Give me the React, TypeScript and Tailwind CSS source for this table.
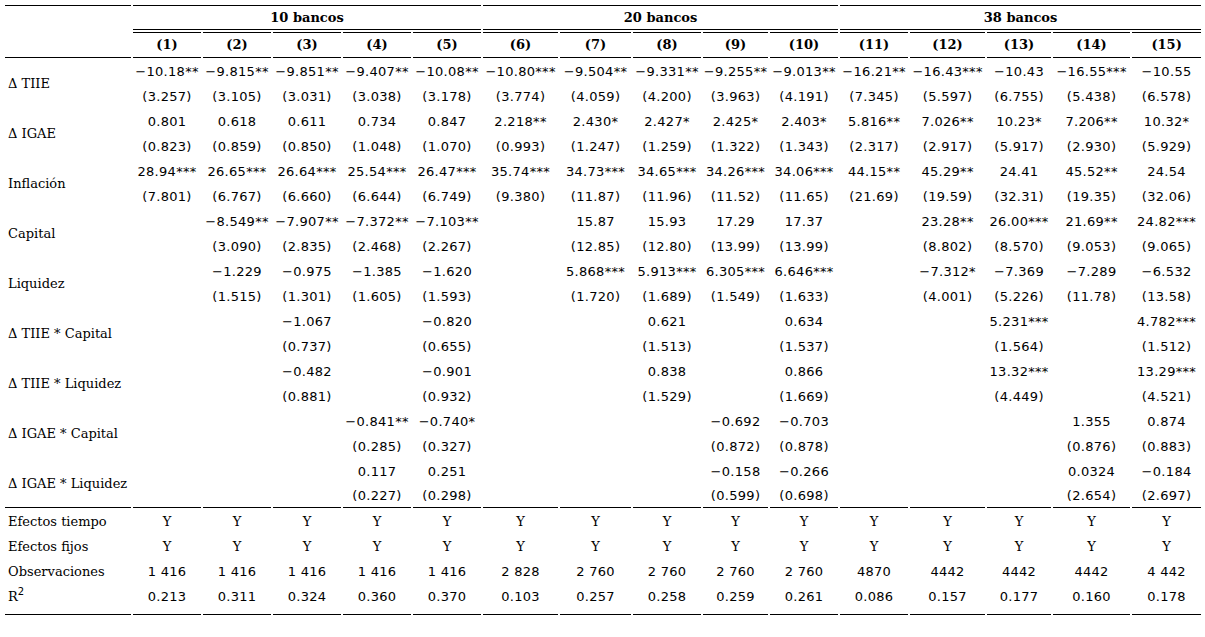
import React from "react";

const M = "\u2212";
type Row = { label: string; coef: string[]; se: string[] };

const e = (n: number) => Array(n).fill("");
const sparse = (m: Record<number, string>) => {
  const a = e(15);
  Object.entries(m).forEach(([k, v]) => (a[Number(k) - 1] = v));
  return a;
};

const rows: Row[] = [
  {
    label: "\u0394 TIIE",
    coef: [`${M}10.18**`, `${M}9.815**`, `${M}9.851**`, `${M}9.407**`, `${M}10.08**`, `${M}10.80***`, `${M}9.504**`, `${M}9.331**`, `${M}9.255**`, `${M}9.013**`, `${M}16.21**`, `${M}16.43***`, `${M}10.43`, `${M}16.55***`, `${M}10.55`],
    se: ["(3.257)", "(3.105)", "(3.031)", "(3.038)", "(3.178)", "(3.774)", "(4.059)", "(4.200)", "(3.963)", "(4.191)", "(7.345)", "(5.597)", "(6.755)", "(5.438)", "(6.578)"],
  },
  {
    label: "\u0394 IGAE",
    coef: ["0.801", "0.618", "0.611", "0.734", "0.847", "2.218**", "2.430*", "2.427*", "2.425*", "2.403*", "5.816**", "7.026**", "10.23*", "7.206**", "10.32*"],
    se: ["(0.823)", "(0.859)", "(0.850)", "(1.048)", "(1.070)", "(0.993)", "(1.247)", "(1.259)", "(1.322)", "(1.343)", "(2.317)", "(2.917)", "(5.917)", "(2.930)", "(5.929)"],
  },
  {
    label: "Inflación",
    coef: ["28.94***", "26.65***", "26.64***", "25.54***", "26.47***", "35.74***", "34.73***", "34.65***", "34.26***", "34.06***", "44.15**", "45.29**", "24.41", "45.52**", "24.54"],
    se: ["(7.801)", "(6.767)", "(6.660)", "(6.644)", "(6.749)", "(9.380)", "(11.87)", "(11.96)", "(11.52)", "(11.65)", "(21.69)", "(19.59)", "(32.31)", "(19.35)", "(32.06)"],
  },
  {
    label: "Capital",
    coef: ["", `${M}8.549**`, `${M}7.907**`, `${M}7.372**`, `${M}7.103**`, "", "15.87", "15.93", "17.29", "17.37", "", "23.28**", "26.00***", "21.69**", "24.82***"],
    se: ["", "(3.090)", "(2.835)", "(2.468)", "(2.267)", "", "(12.85)", "(12.80)", "(13.99)", "(13.99)", "", "(8.802)", "(8.570)", "(9.053)", "(9.065)"],
  },
  {
    label: "Liquidez",
    coef: ["", `${M}1.229`, `${M}0.975`, `${M}1.385`, `${M}1.620`, "", "5.868***", "5.913***", "6.305***", "6.646***", "", `${M}7.312*`, `${M}7.369`, `${M}7.289`, `${M}6.532`],
    se: ["", "(1.515)", "(1.301)", "(1.605)", "(1.593)", "", "(1.720)", "(1.689)", "(1.549)", "(1.633)", "", "(4.001)", "(5.226)", "(11.78)", "(13.58)"],
  },
  {
    label: "\u0394 TIIE * Capital",
    coef: sparse({ 3: `${M}1.067`, 5: `${M}0.820`, 8: "0.621", 10: "0.634", 13: "5.231***", 15: "4.782***" }),
    se: sparse({ 3: "(0.737)", 5: "(0.655)", 8: "(1.513)", 10: "(1.537)", 13: "(1.564)", 15: "(1.512)" }),
  },
  {
    label: "\u0394 TIIE * Liquidez",
    coef: sparse({ 3: `${M}0.482`, 5: `${M}0.901`, 8: "0.838", 10: "0.866", 13: "13.32***", 15: "13.29***" }),
    se: sparse({ 3: "(0.881)", 5: "(0.932)", 8: "(1.529)", 10: "(1.669)", 13: "(4.449)", 15: "(4.521)" }),
  },
  {
    label: "\u0394 IGAE * Capital",
    coef: sparse({ 4: `${M}0.841**`, 5: `${M}0.740*`, 9: `${M}0.692`, 10: `${M}0.703`, 14: "1.355", 15: "0.874" }),
    se: sparse({ 4: "(0.285)", 5: "(0.327)", 9: "(0.872)", 10: "(0.878)", 14: "(0.876)", 15: "(0.883)" }),
  },
  {
    label: "\u0394 IGAE * Liquidez",
    coef: sparse({ 4: "0.117", 5: "0.251", 9: `${M}0.158`, 10: `${M}0.266`, 14: "0.0324", 15: `${M}0.184` }),
    se: sparse({ 4: "(0.227)", 5: "(0.298)", 9: "(0.599)", 10: "(0.698)", 14: "(2.654)", 15: "(2.697)" }),
  },
];

const widths = [126, 68, 68, 68, 68, 68, 75, 71, 68, 65, 68, 68, 75, 64, 77, 69];

const obs = ["1 416", "1 416", "1 416", "1 416", "1 416", "2 828", "2 760", "2 760", "2 760", "2 760", "4870", "4442", "4442", "4442", "4 442"];
const r2 = ["0.213", "0.311", "0.324", "0.360", "0.370", "0.103", "0.257", "0.258", "0.259", "0.261", "0.086", "0.157", "0.177", "0.160", "0.178"];

const num = "font-['DejaVu_Sans',sans-serif] tracking-[0.3px] text-[13px] text-center whitespace-nowrap p-0";
const lab = "font-['DejaVu_Serif',serif] text-[13px] text-left whitespace-nowrap p-0 pl-[3px]";

export default function App() {
  return (
    <div className="w-[1205px] h-[637px] bg-white text-black overflow-hidden">
      <table className="table-fixed border-separate border-spacing-[2px] ml-[3px] mt-[3px] w-[1200px]">
        <colgroup>
          {widths.map((w, i) => (
            <col key={i} style={{ width: w }} />
          ))}
        </colgroup>
        <tbody>
          <tr>
            <td rowSpan={2} className="border-t border-b border-black p-0" />
            {["10 bancos", "20 bancos", "38 bancos"].map((t) => (
              <td
                key={t}
                colSpan={5}
                className="h-[25px] border-t border-b border-black p-0 text-center font-['DejaVu_Serif',serif] font-bold text-[13px]"
              >
                {t}
              </td>
            ))}
          </tr>
          <tr>
            {Array.from({ length: 15 }, (_, i) => (
              <td
                key={i}
                className="h-[26px] border-t border-b border-black p-0 text-center font-['DejaVu_Serif',serif] font-bold text-[13px]"
              >
                ({i + 1})
              </td>
            ))}
          </tr>
          {rows.map((r, ri) => {
            const last = ri === rows.length - 1;
            const bb = last ? " border-b border-black" : "";
            return (
              <React.Fragment key={ri}>
                <tr>
                  <td rowSpan={2} className={lab + bb}>
                    {r.label}
                  </td>
                  {r.coef.map((c, i) => (
                    <td key={i} className={num + " h-[23px]"}>
                      {c}
                    </td>
                  ))}
                </tr>
                <tr>
                  {r.se.map((c, i) => (
                    <td key={i} className={num + " h-[23px]" + bb}>
                      {c}
                    </td>
                  ))}
                </tr>
              </React.Fragment>
            );
          })}
          <tr>
            <td className={lab + " h-[23px]"}>Efectos tiempo</td>
            {Array.from({ length: 15 }, (_, i) => (
              <td key={i} className="h-[23px] p-0 text-center font-['DejaVu_Serif',serif] text-[13px]">
                Y
              </td>
            ))}
          </tr>
          <tr>
            <td className={lab + " h-[23px]"}>Efectos fijos</td>
            {Array.from({ length: 15 }, (_, i) => (
              <td key={i} className="h-[23px] p-0 text-center font-['DejaVu_Serif',serif] text-[13px]">
                Y
              </td>
            ))}
          </tr>
          <tr>
            <td className={lab + " h-[23px]"}>Observaciones</td>
            {obs.map((c, i) => (
              <td key={i} className={num + " h-[23px]"}>
                {c}
              </td>
            ))}
          </tr>
          <tr>
            <td className={lab + " h-[30px] align-top leading-[23px] border-b border-black"}>
              R
              <span className="relative -top-[6px] font-['DejaVu_Sans',sans-serif] text-[10px] leading-none">2</span>
            </td>
            {r2.map((c, i) => (
              <td key={i} className={num + " h-[30px] align-top leading-[23px] border-b border-black"}>
                {c}
              </td>
            ))}
          </tr>
        </tbody>
      </table>
    </div>
  );
}
